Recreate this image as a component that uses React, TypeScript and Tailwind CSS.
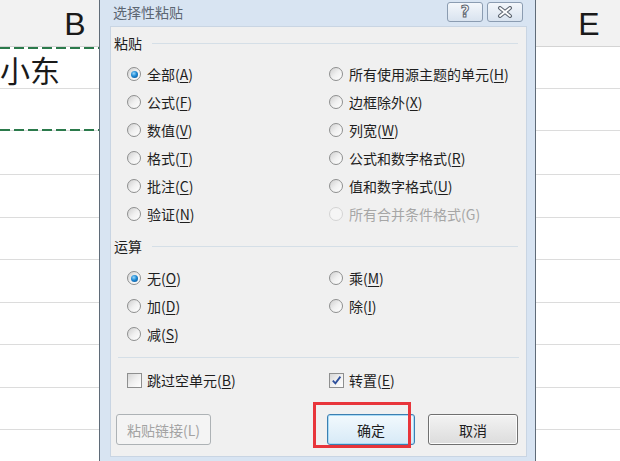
import React from "react";

const cjk = "font-['Noto_Sans_CJK_SC',sans-serif]";
const rowHeights = [42, 42, 44, 43, 42, 43, 42, 43, 42, 42];

function Radio({ checked = false, disabled = false }: { checked?: boolean; disabled?: boolean }) {
  return (
    <span
      className={`flex h-[14px] w-[14px] shrink-0 items-center justify-center rounded-full border ${
        disabled
          ? "border-[#d4d4d4] bg-[#f5f5f5]"
          : "border-[#8e8f8f] bg-gradient-to-br from-[#cfcfcf] via-[#f0f0f0] to-[#ffffff]"
      }`}
    >
      {checked && (
        <span className="h-[7px] w-[7px] rounded-full bg-[radial-gradient(circle_at_40%_35%,#9bd8fa_0,#1d89d4_45%,#0a4a8a_100%)]" />
      )}
    </span>
  );
}

function Check({ checked = false }: { checked?: boolean }) {
  return (
    <span className="flex h-[15px] w-[15px] shrink-0 items-center justify-center border border-[#8e8f8f] bg-gradient-to-br from-[#d6d6d6] via-[#f0f0f0] to-[#ffffff]">
      {checked && (
        <svg width="11" height="11" viewBox="0 0 11 11">
          <path d="M1.8 5.6 L4.4 8.4 L9.4 1.6" fill="none" stroke="#2d4f9c" strokeWidth="1.8" />
        </svg>
      )}
    </span>
  );
}

function Opt({ text, k, checked, disabled }: { text: string; k: string; checked?: boolean; disabled?: boolean }) {
  return (
    <div className="flex h-[28px] items-center gap-[6px]">
      <Radio checked={checked} disabled={disabled} />
      <span className={disabled ? "text-[#a6a6a6]" : "text-[#1e1e1e]"}>
        {text}(
        {disabled ? k : <span className="underline underline-offset-2">{k}</span>})
      </span>
    </div>
  );
}

function Section({ title }: { title: string }) {
  return (
    <div className="flex h-[22px] items-center gap-[10px] pl-[3px] pr-[8px]">
      <span className="text-[#1e1e1e]">{title}</span>
      <div className="h-px flex-1 bg-[#d5dfe7]" />
    </div>
  );
}

export default function App() {
  return (
    <div className="relative h-[461px] w-[620px] overflow-hidden bg-white">
      {/* spreadsheet behind */}
      <div className="flex h-[47px] border-b border-[#d4d4d4] bg-[#f2f2f2] pt-[2px] font-['Liberation_Sans_Narrow','Liberation_Sans',sans-serif] text-[32px] leading-[45px] text-[#1a1a1a]">
        <div className="w-[150px] text-center">B</div>
        <div className="ml-auto w-[62px] text-center">E</div>
      </div>
      {rowHeights.map((h, i) => (
        <div key={i} className="relative border-b border-[#dcdcdc]" style={{ height: h }}>
          {i === 0 && (
            <>
              <div className="absolute left-0 top-0 h-[2px] w-[99px] bg-[repeating-linear-gradient(90deg,#2b7a4b_0_10px,transparent_10px_14px)]" />
              <div className={`${cjk} pt-[3px] pl-[0px] text-[30px] leading-[38px] text-[#1a1a1a]`}>小东</div>
            </>
          )}
          {i === 1 && (
            <div className="absolute -bottom-[1px] left-0 h-[2px] w-[99px] bg-[repeating-linear-gradient(90deg,#2b7a4b_0_10px,transparent_10px_14px)]" />
          )}
        </div>
      ))}

      {/* dialog */}
      <div className={`${cjk} absolute left-[99px] top-0 flex h-[470px] w-[437px] flex-col border-x border-[#5f6b78] bg-[#d8e4f2] text-[14px] leading-[20px]`}>
        <div className="flex h-[26px] items-start justify-between pl-[13px] pr-[12px]">
          <span className="mt-[2px] text-[#5c6673]">选择性粘贴</span>
          <div className="mt-[2px] flex gap-[4px]">
            <div className="flex h-[20px] w-[36px] items-center justify-center rounded-[3px] border border-[#8b9cb1] bg-gradient-to-b from-[#f4f7fb] to-[#d9e3ef]">
              <span className="font-['DejaVu_Sans',sans-serif] text-[15px] font-bold leading-none text-white [-webkit-text-stroke:1px_#5d6570]">?</span>
            </div>
            <div className="flex h-[20px] w-[36px] items-center justify-center rounded-[3px] border border-[#8b9cb1] bg-gradient-to-b from-[#f4f7fb] to-[#d9e3ef]">
              <svg width="16" height="12" viewBox="0 0 16 12">
                <path d="M3 2 L13 10 M13 2 L3 10" stroke="#5d6570" strokeWidth="4" strokeLinecap="round" />
                <path d="M3 2 L13 10 M13 2 L3 10" stroke="#ffffff" strokeWidth="1.8" strokeLinecap="round" />
              </svg>
            </div>
          </div>
        </div>

        <div className="ml-[10px] h-[431px] w-[417px] border border-[#c9d5e3] bg-[#f0f0f0] pt-[5px]">
          <Section title="粘贴" />
          <div className="mt-[6px] grid grid-cols-[202px_1fr] pl-[16px]">
            <Opt text="全部" k="A" checked />
            <Opt text="所有使用源主题的单元" k="H" />
            <Opt text="公式" k="F" />
            <Opt text="边框除外" k="X" />
            <Opt text="数值" k="V" />
            <Opt text="列宽" k="W" />
            <Opt text="格式" k="T" />
            <Opt text="公式和数字格式" k="R" />
            <Opt text="批注" k="C" />
            <Opt text="值和数字格式" k="U" />
            <Opt text="验证" k="N" />
            <Opt text="所有合并条件格式" k="G" disabled />
          </div>

          <div className="mt-[7px]">
            <Section title="运算" />
          </div>
          <div className="mt-[7px] grid grid-cols-[202px_1fr] pl-[16px]">
            <Opt text="无" k="O" checked />
            <Opt text="乘" k="M" />
            <Opt text="加" k="D" />
            <Opt text="除" k="I" />
            <Opt text="减" k="S" />
          </div>

          <div className="mx-[7px] mt-[9px] h-px bg-[#d5dfe7]" />

          <div className="mt-[8px] grid h-[28px] grid-cols-[202px_1fr] items-center pl-[16px]">
            <div className="flex items-center gap-[5px]">
              <Check />
              <span className="text-[#1e1e1e]">
                跳过空单元(<span className="underline underline-offset-2">B</span>)
              </span>
            </div>
            <div className="flex items-center gap-[5px]">
              <Check checked />
              <span className="text-[#1e1e1e]">
                转置(<span className="underline underline-offset-2">E</span>)
              </span>
            </div>
          </div>

          <div className="mt-[20px] flex h-[31px] pl-[5px] pr-[8px]">
            <div className="flex w-[95px] items-center justify-center rounded-[3px] border border-[#adb2b5] bg-[#f4f4f4] text-[#a3a3a3]">
              粘贴链接(L)
            </div>
            <div className="ml-auto flex w-[88px] items-center justify-center rounded-[3px] border border-[#3c7fb1] bg-gradient-to-b from-[#f2f9fd] to-[#d7eaf7] text-[#1e1e1e] shadow-[inset_0_0_0_1px_#a9dbf6]">
              确定
            </div>
            <div className="ml-[13px] flex w-[90px] items-center justify-center rounded-[3px] border border-[#707070] bg-gradient-to-b from-[#f3f3f3] to-[#dcdcdc] text-[#1e1e1e] shadow-[inset_0_0_0_1px_#fcfcfc]">
              取消
            </div>
          </div>
        </div>
      </div>

      {/* red annotation box */}
      <div className="absolute left-[313px] top-[402px] h-[46px] w-[98px] border-[3px] border-[#e8353b]" />
    </div>
  );
}
